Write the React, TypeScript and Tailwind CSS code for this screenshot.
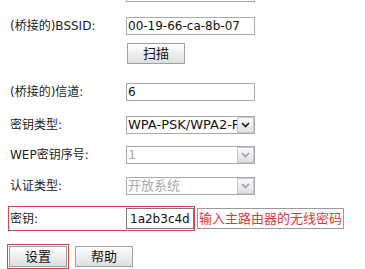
import React from 'react';

const font = { fontFamily: '"DejaVu Sans", "Noto Sans CJK SC", sans-serif' };

function Label({ children }: { children: React.ReactNode }) {
  return <div className="w-[126px] shrink-0 pl-[10px] text-[12px] text-[#222] leading-none">{children}</div>;
}

function TextBox({ value }: { value: string }) {
  return (
    <div className="flex h-[18px] w-[129px] items-center border border-[#a9a9a9] bg-white px-[1px] text-[12px] text-[#111]">
      {value}
    </div>
  );
}

function Select({ value, disabled }: { value: string; disabled?: boolean }) {
  return (
    <div className="flex h-[18px] w-[129px] items-stretch border border-[#a9a9a9] bg-white">
      <div className={`flex min-w-0 flex-1 items-center overflow-hidden px-[1px] text-[13px] ${disabled ? 'text-[#aaa]' : 'text-[#111]'}`}>
        <span className="whitespace-nowrap">{value}</span>
      </div>
      <div className="flex w-[17px] shrink-0 items-center justify-center border border-[#c3c8cf] bg-gradient-to-b from-[#fafafa] to-[#dde0e4]">
        <svg width="9" height="6" viewBox="0 0 9 6">
          <path d="M1 1 L4.5 4.5 L8 1" fill="none" stroke={disabled ? '#9aa0a8' : '#1a1a1a'} strokeWidth="1.6" />
        </svg>
      </div>
    </div>
  );
}

function Btn({ children }: { children: React.ReactNode }) {
  return (
    <div className="flex h-[21px] w-[58px] items-center justify-center border border-[#a0a0a0] bg-gradient-to-b from-white to-[#dedede] text-[13px] text-[#111]">
      {children}
    </div>
  );
}

export default function App() {
  return (
    <div className="h-[269px] w-[365px] overflow-hidden bg-white" style={font}>
      <div className="flex items-center -mt-[16px] h-[18px]">
        <Label>(桥接的)SSID:</Label>
        <TextBox value="" />
      </div>
      <div className="mt-[15px] flex items-center h-[18px]">
        <Label>(桥接的)BSSID:</Label>
        <TextBox value="00-19-66-ca-8b-07" />
      </div>
      <div className="mt-[8px] pl-[127px]">
        <Btn>扫描</Btn>
      </div>
      <div className="mt-[19px] flex items-center h-[18px]">
        <Label>(桥接的)信道:</Label>
        <TextBox value="6" />
      </div>
      <div className="mt-[15px] flex items-center">
        <Label>密钥类型:</Label>
        <Select value="WPA-PSK/WPA2-PSK" />
      </div>
      <div className="mt-[12px] flex items-center">
        <Label>WEP密钥序号:</Label>
        <Select value="1" disabled />
      </div>
      <div className="mt-[13px] flex items-center">
        <Label>认证类型:</Label>
        <Select value="开放系统" disabled />
      </div>
      <div className="mt-[11px] flex items-center">
        <div className="ml-[8px] flex h-[25px] w-[187px] items-center border border-[#d04848]">
          <div className="w-[117px] pl-[1px] text-[12px] text-[#222]">密钥:</div>
          <div className="flex h-[21px] items-center border border-[#7a7a7a] bg-white px-[3px] text-[12px] text-[#111]">1a2b3c4d</div>
        </div>
        <div className="ml-[2px] flex h-[21px] items-center border border-[#9a9a9a] pl-[1px] pr-[1px] text-[13px] text-[#d83a3a]">
          输入主路由器的无线密码
        </div>
      </div>
      <div className="mt-[13px] flex items-start gap-[6px]">
        <div className="ml-[7px] border border-[#d04848] p-[1px]">
          <Btn>设置</Btn>
        </div>
        <div className="mt-[2px]">
          <Btn>帮助</Btn>
        </div>
      </div>
    </div>
  );
}
